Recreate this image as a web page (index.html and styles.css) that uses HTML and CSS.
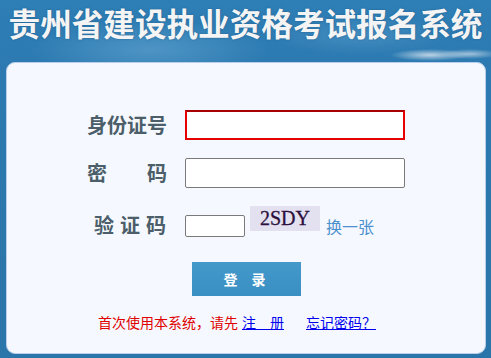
FILE: index.html
```html
<!DOCTYPE html>
<html lang="zh-CN">
<head>
<meta charset="utf-8">
<title>贵州省建设执业资格考试报名系统</title>
<link rel="stylesheet" href="styles.css">
</head>
<body>
<div class="page">
  <h1 class="title">贵州省建设执业资格考试报名系统</h1>
  <div class="panel">
    <div class="row row-id">
      <label class="label">身份证号</label>
      <input class="field field-active" type="text">
    </div>
    <div class="row row-pwd">
      <label class="label label-justify">密码</label>
      <input class="field" type="password">
    </div>
    <div class="row row-code">
      <label class="label label-code">验证码</label>
      <input class="field field-code" type="text">
      <div class="captcha">2SDY</div>
      <a class="refresh">换一张</a>
    </div>
    <div class="row row-btn">
      <button class="btn"><span>登</span><span>录</span></button>
    </div>
    <div class="row row-links">
      <span class="hint">首次使用本系统，请先</span>
      <a class="link link-reg">注　册</a>
      <a class="link link-forgot">忘记密码？</a>
    </div>
  </div>
</div>
</body>
</html>
```

FILE: styles.css
```css
html, body {
  margin: 0;
  padding: 0;
}
body {
  width: 491px;
  height: 358px;
  overflow: hidden;
  font-family: "Noto Sans CJK SC", "Noto Sans", sans-serif;
  background:
    radial-gradient(ellipse 40px 6px at 430px 55px, rgba(235,240,245,0.75), rgba(235,240,245,0) 100%),
    radial-gradient(ellipse 30px 5px at 470px 54px, rgba(235,240,245,0.6), rgba(235,240,245,0) 100%),
    radial-gradient(ellipse 120px 30px at 150px 50px, rgba(120,180,220,0.45), rgba(120,180,220,0) 100%),
    radial-gradient(ellipse 90px 20px at 360px 35px, rgba(110,170,215,0.35), rgba(110,170,215,0) 100%),
    linear-gradient(180deg, #2e7fb6 0%, #2c7ab1 18%, #2a75a9 100%);
}
.page {
  display: flex;
  flex-direction: column;
  height: 358px;
}
.title {
  margin: 0;
  height: 62px;
  padding-top: 2px;
  box-sizing: border-box;
  font-family: "Noto Sans CJK SC", sans-serif;
  font-size: 31.6px;
  line-height: 40px;
  font-weight: bold;
  color: #f4f4f4;
  text-align: center;
  white-space: nowrap;
  letter-spacing: 0;
  text-shadow: 0 0 2px rgba(20,60,100,0.5);
}
.panel {
  margin-left: 6px;
  width: 480px;
  height: 292px;
  box-sizing: border-box;
  background: #f5f8fe;
  border: 1px solid #b9cfe9;
  border-radius: 9px;
  padding-top: 47px;
  display: flex;
  flex-direction: column;
}
.row {
  display: flex;
  align-items: center;
  padding-left: 80px;
}
.label {
  width: 80px;
  margin-right: 18px;
  font-size: 20px;
  line-height: 30px;
  font-weight: bold;
  color: #4b5e69;
  white-space: nowrap;
}
.label-justify {
  text-align: justify;
  text-align-last: justify;
}
.label-code {
  box-sizing: border-box;
  padding-left: 7px;
  letter-spacing: 6px;
  align-self: flex-start;
  margin-top: 4px;
}
.field {
  box-sizing: border-box;
  width: 220px;
  height: 30px;
  margin: 0;
  padding: 0 4px;
  background: #fff;
  border: 1px solid #7a7a7a;
  border-radius: 2px;
  outline: none;
  font-size: 14px;
}
.field-active {
  border: 2px solid #e60000;
  border-top-color: #a80000;
  border-radius: 0;
}
.row-pwd {
  margin-top: 18px;
}
.row-code {
  margin-top: 18px;
  align-items: flex-start;
  height: 32px;
}
.field-code {
  width: 60px;
  height: 22px;
  margin-top: 9px;
  margin-right: 5px;
}
.captcha {
  width: 70px;
  height: 25px;
  background: #e3e1f0;
  color: #2b0f3d;
  font-family: "Liberation Serif", "Times New Roman", serif;
  font-size: 20px;
  line-height: 24px;
  text-align: center;
  margin-right: 6px;
  -webkit-text-stroke: 0.3px #2b0f3d;
}
.refresh {
  font-size: 16px;
  line-height: 20px;
  margin-top: 10px;
  color: #4c90cf;
  cursor: pointer;
}
.row-btn {
  margin-top: 24px;
  padding-left: 185px;
}
.btn {
  width: 109px;
  height: 34px;
  border: none;
  margin: 0;
  padding: 0 4px 0 0;
  background: linear-gradient(180deg, #4399ca 0%, #3a8fc3 100%);
  color: #fff;
  font-family: "Noto Sans CJK SC", sans-serif;
  font-size: 14px;
  font-weight: bold;
  display: flex;
  justify-content: center;
  align-items: center;
  gap: 14px;
}
.row-links {
  margin-top: 16px;
  padding-left: 91px;
  font-size: 14px;
  line-height: 20px;
}
.hint {
  color: #e00000;
  margin-right: 4px;
}
.link {
  color: #0000ee;
  text-decoration: underline;
  cursor: pointer;
}
.link-forgot {
  margin-left: 22px;
}
```
